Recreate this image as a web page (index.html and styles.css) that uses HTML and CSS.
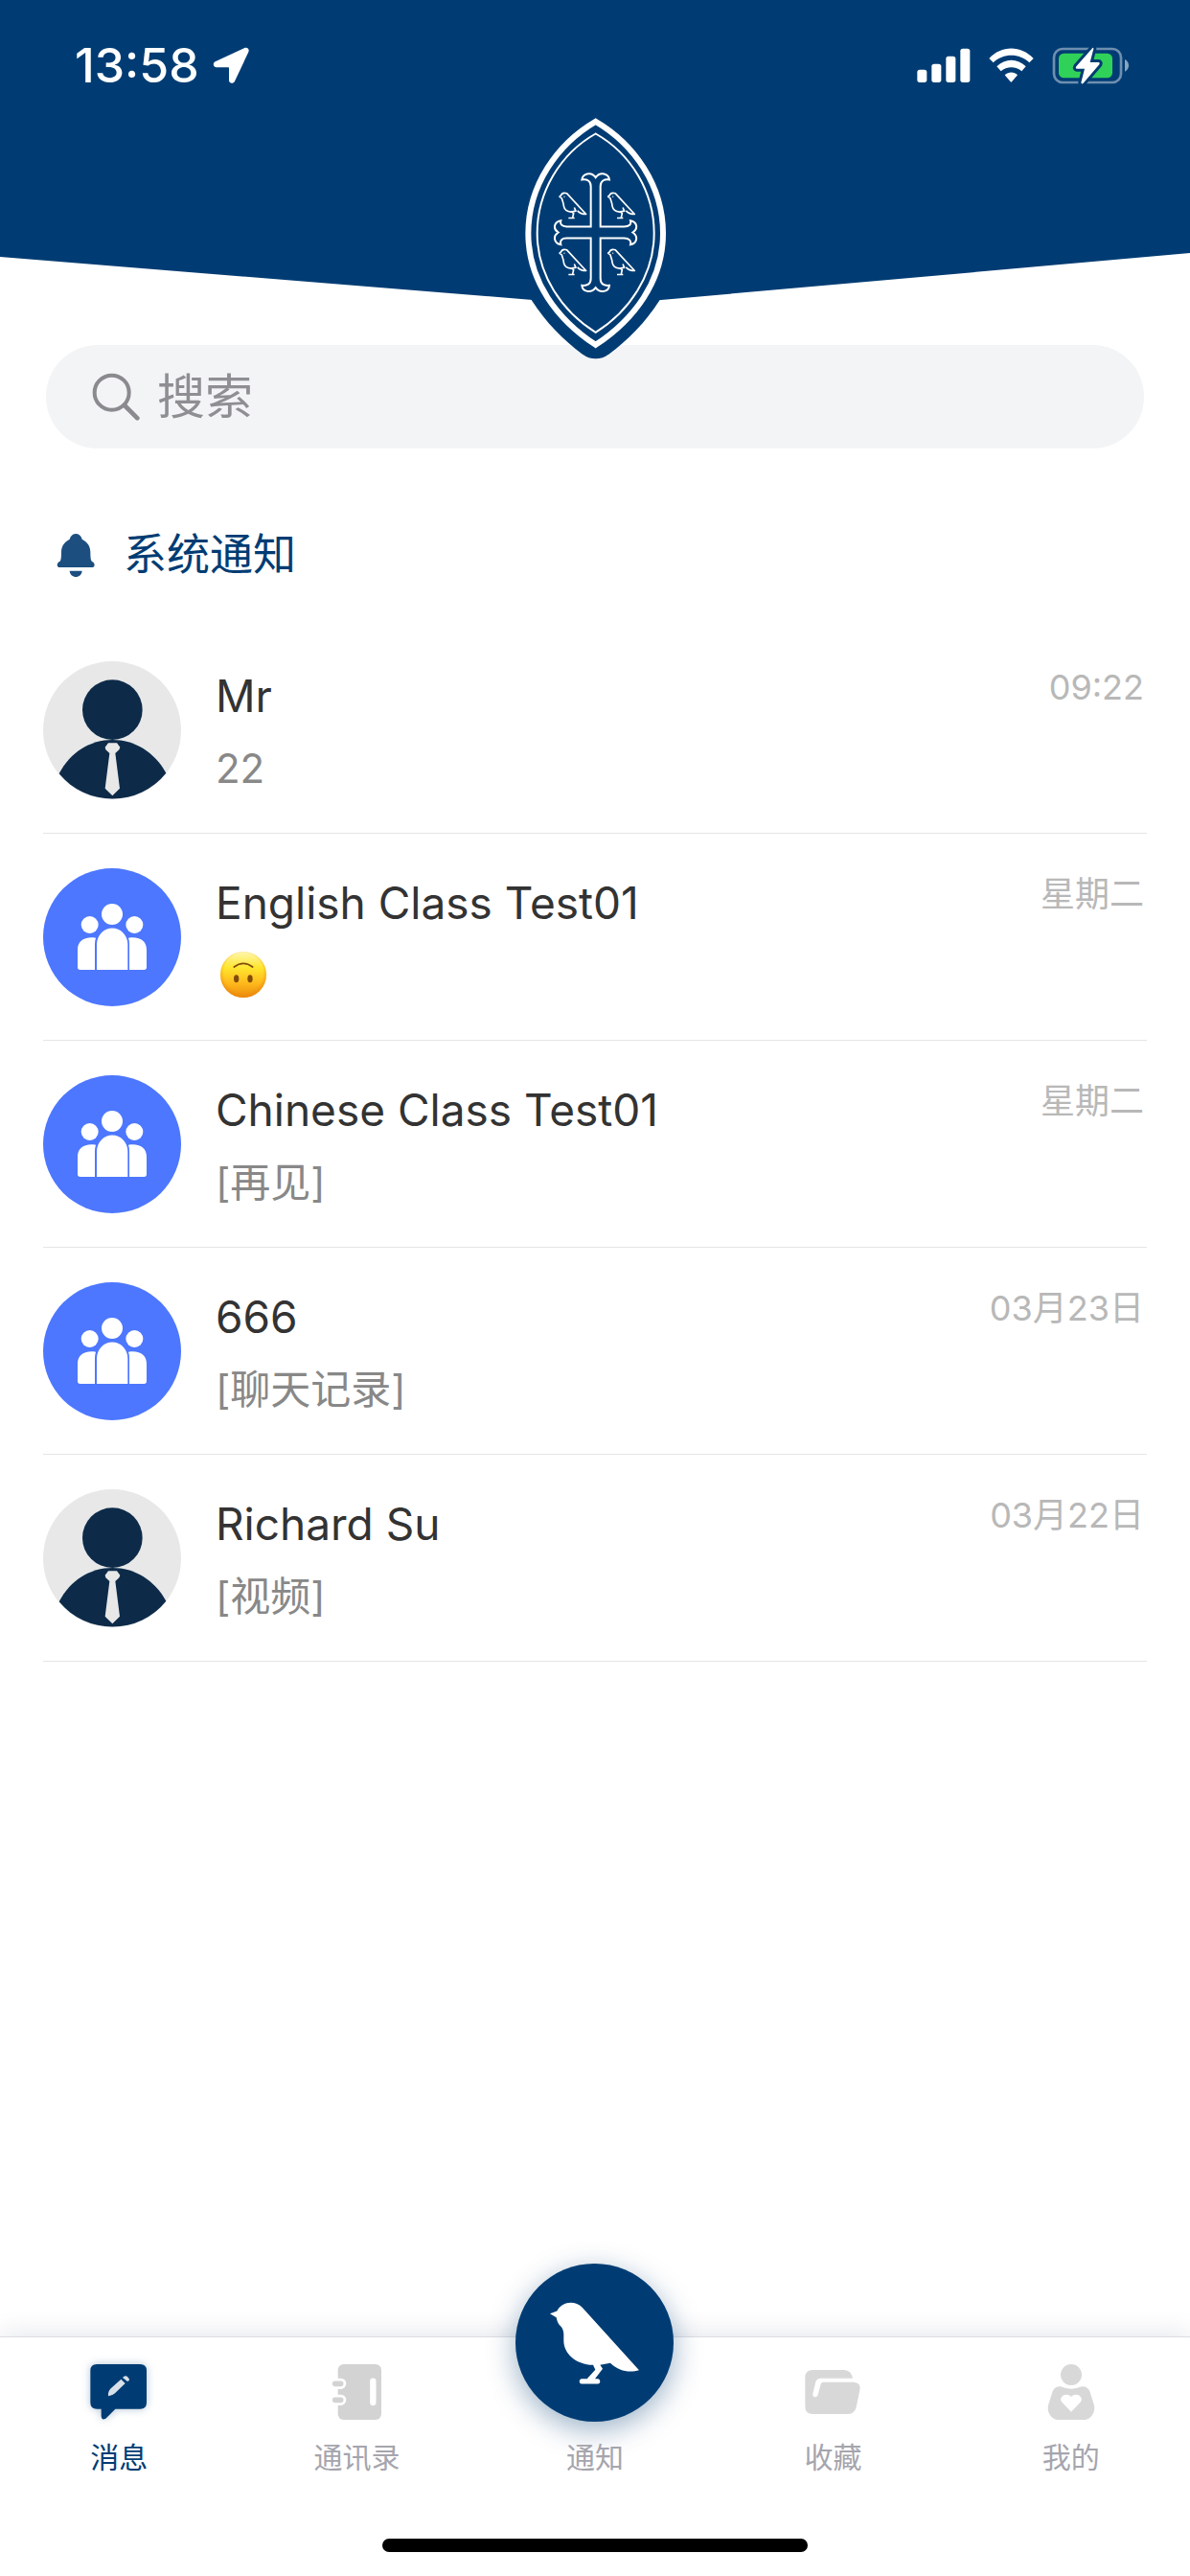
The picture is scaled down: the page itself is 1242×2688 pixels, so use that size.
FILE: index.html
```
<!DOCTYPE html>
<html lang="zh-CN">
<head>
  <meta charset="UTF-8" />
  <meta name="viewport" content="width=device-width, initial-scale=1.0"/>
  <title>消息</title>
  <link rel="stylesheet" href="styles.css">
</head>
<body>
  <!-- shared icons -->
  <svg class="sprite" aria-hidden="true">
    <symbol id="person" viewBox="45 90 432 432">
      <circle cx="261" cy="306" r="216" fill="#e8e8e8"/>
      <circle cx="262" cy="242" r="94" fill="#0d2b49"/>
      <path d="M95 442C130 374 193 336 262 336S394 374 430 440A216 216 0 0 1 95 442Z" fill="#0d2b49"/>
      <path d="M249 346H276L286 359 283 367 271 378 285 488 262 511 239 488 253 378 241 367 239 359Z" fill="#e8e8e8"/>
    </symbol>
    <symbol id="group" viewBox="45 738 432 432">
      <circle cx="261" cy="954" r="216" fill="#4d77ff"/>
      <g fill="#fff">
        <circle cx="261" cy="882" r="33"/>
        <circle cx="191" cy="915" r="27"/>
        <circle cx="331" cy="915" r="27"/>
        <path d="M213 1056V976a48 50 0 0 1 97 0V1056Z"/>
        <path d="M207 1056H161Q153 1056 153 1048V994C153 966 173 951 210 956Q207 965 207 976Z"/>
        <path d="M315 1056H361Q369 1056 369 1048V994C369 966 349 951 312 956Q315 965 315 976Z"/>
      </g>
    </symbol>
    <symbol id="crest-bird" viewBox="0 0 90 90" overflow="visible">
      <path d="M2 16L7 13C10 5 18 3 26 6L86 71C76 71 66 68 59 60M2 16L10 21C12 30 16 36 16 45C18 56 27 63 39 64L54 61L49 50M41 64L47 68L44 81M31 83H50" fill="none" stroke="#fff" stroke-width="5" stroke-linejoin="round"/>
      <circle cx="18" cy="16" r="2" fill="#fff"/>
    </symbol>
  </svg>

  <header class="header">
    <svg class="header-bg" viewBox="0 0 1242 314" preserveAspectRatio="none" aria-hidden="true">
      <path d="M0 0H1242V264L690 313Q621 317 556 313L0 268Z" fill="#003c73"/>
    </svg>
    <div class="status">
      <span class="clock">13:58</span>
      <svg class="arrow" viewBox="664 148 114 114" aria-hidden="true">
        <path d="M764 151C772 148 780 155 776 164L733 255C728 265 715 262 715 252V214Q715 212 713 212H676C665 212 663 199 672 194Z" fill="#fff"/>
      </svg>
      <div class="status-right">
        <svg class="signal" viewBox="110 84 168 117" fill="#fff" aria-hidden="true">
          <rect x="111" y="155" width="30" height="40" rx="8"/>
          <rect x="156" y="137" width="30" height="58" rx="8"/>
          <rect x="201" y="113" width="30" height="82" rx="8"/>
          <rect x="246" y="89" width="30" height="106" rx="8"/>
        </svg>
        <svg class="wifi" viewBox="333 84 147 117" fill="#fff" aria-hidden="true">
          <path d="M337 120C375 78 437 78 476 120L463 133C432 103 381 103 350 133Z"/>
          <path d="M361 145C387 119 426 119 452 145L439 160C421 144 392 144 374 160Z"/>
          <path d="M386 172C398 161 415 161 426 172L408 193Q406 195 404 193Z"/>
        </svg>
        <svg class="battery" viewBox="534 84 243 117" aria-hidden="true">
          <rect x="540" y="90" width="210" height="105" rx="27" fill="none" stroke="#6e8fb0" stroke-width="8"/>
          <path d="M762 123C778 130 778 154 762 161Z" fill="#8aa5bf"/>
          <rect x="555" y="104" width="168" height="77" rx="16" fill="#30d158"/>
          <path d="M661 87L610 145Q606 151 612 152H636L625 196Q627 202 632 197L682 139Q685 132 679 132H653L664 90Q664 85 661 87Z" fill="#fff" stroke="#003c73" stroke-width="18" stroke-linejoin="round" paint-order="stroke"/>
        </svg>
      </div>
    </div>
    <svg class="crest" viewBox="0 0 630 830" aria-label="校徽" role="img">
      <path d="M305 40C170 120 62 270 62 430C62 490 75 560 105 640C150 710 205 765 262 807Q305 838 348 807C405 765 460 710 505 640C540 560 548 490 548 430C548 270 440 120 305 40Z" fill="#003c73"/>
      <g fill="none" stroke="#fff">
        <path d="M305 80C185 150 94 280 94 430S185 700 305 779C425 700 516 580 516 430S425 150 305 80Z" stroke-width="18"/>
        <path d="M305 118C195 180 122 300 122 430S200 675 305 740C410 675 488 560 488 430S415 180 305 118Z" stroke-width="6"/>
        <path d="M290 409V283C290 265 278 260 262 262C264 244 290 234 305 255C320 234 346 244 348 262C332 260 320 265 320 283V409H394C411 409 417 401 414 390C434 393 440 415 421 427C440 440 434 462 414 465C417 453 410 445 394 445H320V571C320 589 332 595 348 593C346 612 320 620 305 600C290 620 264 612 262 593C278 595 290 589 290 571V445H214C198 445 193 453 196 465C176 462 169 440 188 427C169 415 176 393 196 390C193 401 199 409 214 409Z" stroke-width="6"/>
      </g>
      <use href="#crest-bird" x="189" y="299" width="90" height="90"/>
      <use href="#crest-bird" x="341" y="299" width="90" height="90"/>
      <use href="#crest-bird" x="189" y="476" width="90" height="90"/>
      <use href="#crest-bird" x="341" y="476" width="90" height="90"/>
    </svg>
  </header>

  <main class="content">
    <label class="search">
      <svg class="search-icon" viewBox="196 148 150 150" aria-hidden="true">
        <circle cx="258" cy="210" r="54" fill="none" stroke="#8a8a8f" stroke-width="12"/>
        <path d="M298 250L338 290" stroke="#8a8a8f" stroke-width="14" stroke-linecap="round"/>
      </svg>
      <input type="search" placeholder="搜索" aria-label="搜索">
    </label>

    <a class="notice" href="#notice">
      <svg class="bell" viewBox="88 648 120 141" fill="#1c4f80" aria-hidden="true">
        <path d="M129 668C134 645 163 645 168 668C185 677 194 690 194 708C194 725 195 735 199 738C210 742 209 756 199 756H98C88 756 87 742 98 738C102 735 103 725 103 708C103 690 112 677 129 668Z"/>
        <path d="M129 767H168C166 792 131 792 129 767Z"/>
      </svg>
      <span>系统通知</span>
    </a>

    <ul class="chats">
      <li class="chat">
        <svg class="avatar" aria-hidden="true"><use href="#person"/></svg>
        <div class="chat-text">
          <h2>Mr</h2>
          <p>22</p>
        </div>
        <time>09:22</time>
      </li>
      <li class="chat">
        <svg class="avatar" aria-hidden="true"><use href="#group"/></svg>
        <div class="chat-text">
          <h2>English Class Test01</h2>
          <p>
            <svg class="emoji" viewBox="0 0 150 150" role="img" aria-label="倒脸">
              <defs>
                <linearGradient id="face" x1="0" y1="0" x2="0" y2="1">
                  <stop offset="0" stop-color="#fff7b0"/>
                  <stop offset="0.35" stop-color="#ffe62e"/>
                  <stop offset="0.7" stop-color="#ffb71c"/>
                  <stop offset="1" stop-color="#e88a0c"/>
                </linearGradient>
                <radialGradient id="rim" cx="0.5" cy="0.45" r="0.56">
                  <stop offset="0.75" stop-color="#f59a10" stop-opacity="0"/>
                  <stop offset="1" stop-color="#e87f08" stop-opacity="0.8"/>
                </radialGradient>
              </defs>
              <circle cx="75" cy="75" r="72" fill="url(#face)"/>
              <circle cx="75" cy="75" r="72" fill="url(#rim)"/>
              <path d="M46 51Q75 29 104 51" fill="none" stroke="#824b0b" stroke-width="5" stroke-linecap="round"/>
              <ellipse cx="53" cy="88" rx="8" ry="12" fill="#824b0b"/>
              <ellipse cx="96" cy="88" rx="8" ry="12" fill="#824b0b"/>
            </svg>
          </p>
        </div>
        <time>星期二</time>
      </li>
      <li class="chat">
        <svg class="avatar" aria-hidden="true"><use href="#group"/></svg>
        <div class="chat-text">
          <h2>Chinese Class Test01</h2>
          <p>[再见]</p>
        </div>
        <time>星期二</time>
      </li>
      <li class="chat">
        <svg class="avatar" aria-hidden="true"><use href="#group"/></svg>
        <div class="chat-text">
          <h2>666</h2>
          <p>[聊天记录]</p>
        </div>
        <time>03月23日</time>
      </li>
      <li class="chat">
        <svg class="avatar" aria-hidden="true"><use href="#person"/></svg>
        <div class="chat-text">
          <h2>Richard Su</h2>
          <p>[视频]</p>
        </div>
        <time>03月22日</time>
      </li>
    </ul>
  </main>

  <footer class="footer">
    <nav class="tabs">
      <a class="tab active" href="#messages">
        <svg class="tab-icon glow" viewBox="102 165 186 186" aria-hidden="true">
          <path d="M126 171H262Q282 171 282 191V291Q282 311 262 311H184L154 341Q141 348 140 334V311H126Q106 311 106 291V191Q106 171 126 171Z" fill="#003c73"/>
          <path d="M162 271Q160 257 170 247L202 218 215 231 183 262Q175 270 162 271ZM207 213Q215 203 224 212T222 225Z" fill="#d9e0e9"/>
        </svg>
        <span>消息</span>
      </a>
      <a class="tab" href="#contacts">
        <svg class="tab-icon" viewBox="843 165 186 186" aria-hidden="true">
          <rect x="875" y="171" width="136" height="174" rx="18" fill="#d3d3d3"/>
          <g stroke-linecap="round" stroke="#fff">
            <path d="M985 224V291" stroke-width="19"/>
            <path d="M866 232H884M866 283H884" stroke-width="34"/>
            <path d="M866 232H884M866 283H884" stroke-width="17" stroke="#d3d3d3"/>
          </g>
        </svg>
        <span>通讯录</span>
      </a>
      <a class="tab" href="#notify">
        <span class="fab">
          <svg class="bird" viewBox="210 235 300 275" fill="#fff" aria-hidden="true">
            <path d="M219 280L241 272C256 242 297 237 320 261L498 457C470 466 436 462 408 435L376 441L384 453L360 484H369C378 485 378 500 369 500H318C309 499 309 485 318 484H335L361 456L354 441C300 440 262 405 262 365C262 345 264 333 253 320C244 311 241 303 239 292Z"/>
          </svg>
        </span>
        <span>通知</span>
      </a>
      <a class="tab" href="#favorites">
        <svg class="tab-icon" viewBox="171 165 186 186" aria-hidden="true">
          <path d="M202 189H300Q322 190 327 215H226Q215 215 211 226L202 263C200 276 215 278 218 266L227 233Q229 227 235 227H329Q354 228 349 253L338 305Q333 327 310 327H202Q178 327 178 303V213Q178 189 202 189Z" fill="#d8d8d8"/>
        </svg>
        <span>收藏</span>
      </a>
      <a class="tab" href="#me">
        <svg class="tab-icon" viewBox="918 165 186 186" aria-hidden="true">
          <circle cx="1011" cy="204" r="33" fill="#d8d8d8"/>
          <path d="M978 241Q1011 255 1044 241Q1062 240 1069 256L1081 293C1091 320 1072 345 1050 345H972C950 345 931 320 941 293L953 256Q960 240 978 241Z" fill="#d8d8d8"/>
          <path d="M1011 320L981 289C970 271 998 257 1011 273C1024 257 1052 271 1041 289Z" fill="#fff"/>
        </svg>
        <span>我的</span>
      </a>
    </nav>
    <div class="home-bar"></div>
  </footer>
</body>
</html>
```
FILE: styles.css
```
* {
  box-sizing: border-box;
}

body {
  margin: 0;
  min-height: 100vh;
  display: flex;
  flex-direction: column;
  font-family: Inter, "Noto Sans CJK SC", sans-serif;
  background-color: #fff;
  color: #333;
}

svg {
  display: block;
  flex: none;
}

a {
  text-decoration: none;
}

.sprite {
  position: absolute;
  width: 0;
  height: 0;
}

/* header */
.header {
  position: relative;
  height: 360px;
}

.header-bg {
  position: absolute;
  top: 0;
  left: 0;
  width: 100%;
  height: 314px;
}

.crest {
  position: absolute;
  top: 100px;
  left: 50%;
  width: 210px;
  height: 277px;
  margin-left: -101px;
}

.status {
  position: relative;
  display: flex;
  align-items: center;
  height: 136px;
  padding: 0 63px 0 78px;
}

.clock {
  color: #fff;
  font-size: 50px;
  font-weight: 500;
}

.arrow {
  width: 38px;
  height: 38px;
  margin-left: 14px;
}

.status-right {
  display: flex;
  gap: 18px;
  margin-left: auto;
}

.signal {
  width: 56px;
  height: 39px;
}

.wifi {
  width: 49px;
  height: 39px;
}

.battery {
  width: 81px;
  height: 39px;
}

/* content */
.content {
  flex: 1;
  padding: 0 45px;
}

.search {
  display: flex;
  align-items: center;
  gap: 18px;
  height: 108px;
  margin: 0 3px;
  padding: 0 48px;
  border-radius: 54px;
  background-color: #f3f4f6;
}

.search-icon {
  width: 50px;
  height: 50px;
}

.search input {
  flex: 1;
  min-width: 0;
  padding: 0;
  border: none;
  outline: none;
  background: none;
  color: #333;
  font-family: inherit;
  font-size: 50px;
}

.search input::placeholder {
  color: #8e8e93;
}

.notice {
  display: flex;
  align-items: center;
  gap: 30px;
  height: 186px;
  padding: 36px 14px 0;
  color: #003c73;
  font-size: 45px;
  line-height: 60px;
}

.bell {
  width: 40px;
  height: 47px;
}

.chats {
  margin: 0;
  padding: 0;
  list-style: none;
}

.chat {
  display: flex;
  align-items: flex-start;
  height: 216px;
  padding-top: 36px;
  border-bottom: 1px solid #e5e5e5;
}

.avatar {
  width: 144px;
  height: 144px;
}

.chat-text {
  flex: 1;
  min-width: 0;
  padding-left: 36px;
}

.chat h2 {
  margin: 0;
  font-size: 46px;
  font-weight: 400;
  line-height: 72px;
}

.chat p {
  margin: 4px 0 0;
  color: #888;
  font-size: 42px;
  line-height: 72px;
}

.chat time {
  padding-right: 3px;
  color: #b8b8b8;
  font-size: 36px;
  line-height: 54px;
}

.emoji {
  width: 50px;
  height: 50px;
  margin: 14px 0 0 4px;
}

/* bottom tabs */
.footer {
  height: 250px;
  border-top: 1px solid #dcdde2;
  background-color: #fff;
  box-shadow: 0 -4px 24px rgba(0, 30, 80, 0.1);
}

.tabs {
  display: grid;
  grid-template-columns: repeat(5, 1fr);
  grid-template-rows: 210px;
}

/* the round button is taller than the bar, so items grow upwards */
.tab {
  display: flex;
  flex-direction: column;
  align-items: center;
  justify-content: flex-end;
  gap: 15px;
  padding-bottom: 63px;
  color: #a5a5ad;
  font-size: 30px;
  line-height: 44px;
}

.tab.active {
  color: #003c73;
}

.tab-icon {
  width: 62px;
  height: 62px;
}

.glow {
  filter: drop-shadow(0 0 4px rgba(0, 60, 115, 0.3));
}

.fab {
  display: flex;
  flex: none;
  align-items: center;
  justify-content: center;
  width: 165px;
  height: 165px;
  border-radius: 50%;
  background-color: #003c73;
  box-shadow: 0 8px 30px rgba(0, 60, 115, 0.4);
}

.bird {
  width: 100px;
  height: 92px;
}

.home-bar {
  width: 444px;
  height: 14px;
  margin: 0 auto;
  border-radius: 7px;
  background-color: #000;
}
```
